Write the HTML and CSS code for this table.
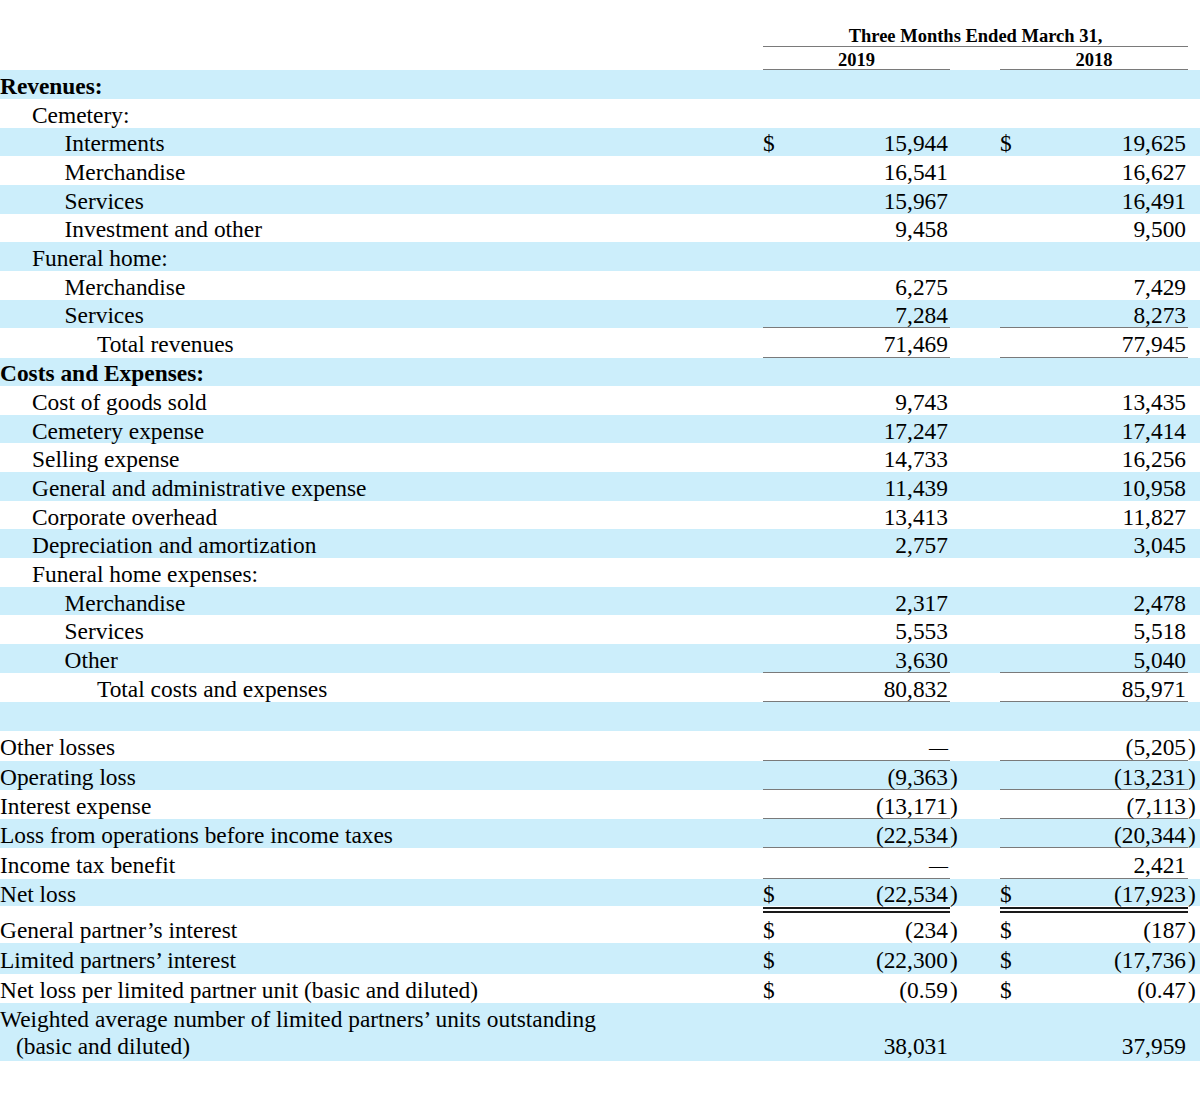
FILE: index.html
```html
<!DOCTYPE html>
<html lang="en">
<head>
<meta charset="utf-8">
<title>Statement of Operations</title>
<link rel="stylesheet" href="styles.css">
</head>
<body>
<table class="fin">
  <colgroup>
    <col class="c-label">
    <col class="c-num">
    <col class="c-par">
    <col class="c-gap">
    <col class="c-num2">
    <col class="c-par">
  </colgroup>
  <thead>
    <tr class="hd1">
      <td></td>
      <td colspan="4" class="hcell">Three Months Ended March 31,</td>
      <td></td>
    </tr>
    <tr class="hd2">
      <td></td>
      <td class="hcell">2019</td>
      <td></td>
      <td></td>
      <td class="hcell">2018</td>
      <td></td>
    </tr>
  </thead>
  <tbody>
    <tr class="b"><td class="lb bold">Revenues:</td><td class="n"></td><td></td><td></td><td class="n"></td><td></td></tr>
    <tr><td class="lb i1">Cemetery:</td><td class="n"></td><td></td><td></td><td class="n"></td><td></td></tr>
    <tr class="b"><td class="lb i2">Interments</td><td class="n"><span class="d">$</span>15,944</td><td></td><td></td><td class="n"><span class="d">$</span>19,625</td><td></td></tr>
    <tr><td class="lb i2">Merchandise</td><td class="n">16,541</td><td></td><td></td><td class="n">16,627</td><td></td></tr>
    <tr class="b"><td class="lb i2">Services</td><td class="n">15,967</td><td></td><td></td><td class="n">16,491</td><td></td></tr>
    <tr><td class="lb i2">Investment and other</td><td class="n">9,458</td><td></td><td></td><td class="n">9,500</td><td></td></tr>
    <tr class="b"><td class="lb i1">Funeral home:</td><td class="n"></td><td></td><td></td><td class="n"></td><td></td></tr>
    <tr><td class="lb i2">Merchandise</td><td class="n">6,275</td><td></td><td></td><td class="n">7,429</td><td></td></tr>
    <tr class="b ul"><td class="lb i2">Services</td><td class="n">7,284</td><td></td><td></td><td class="n">8,273</td><td></td></tr>
    <tr class="ul t293"><td class="lb i3">Total revenues</td><td class="n">71,469</td><td></td><td></td><td class="n">77,945</td><td></td></tr>
    <tr class="b"><td class="lb bold">Costs and Expenses:</td><td class="n"></td><td></td><td></td><td class="n"></td><td></td></tr>
    <tr><td class="lb i1">Cost of goods sold</td><td class="n">9,743</td><td></td><td></td><td class="n">13,435</td><td></td></tr>
    <tr class="b"><td class="lb i1">Cemetery expense</td><td class="n">17,247</td><td></td><td></td><td class="n">17,414</td><td></td></tr>
    <tr><td class="lb i1">Selling expense</td><td class="n">14,733</td><td></td><td></td><td class="n">16,256</td><td></td></tr>
    <tr class="b"><td class="lb i1">General and administrative expense</td><td class="n">11,439</td><td></td><td></td><td class="n">10,958</td><td></td></tr>
    <tr><td class="lb i1">Corporate overhead</td><td class="n">13,413</td><td></td><td></td><td class="n">11,827</td><td></td></tr>
    <tr class="b"><td class="lb i1">Depreciation and amortization</td><td class="n">2,757</td><td></td><td></td><td class="n">3,045</td><td></td></tr>
    <tr><td class="lb i1">Funeral home expenses:</td><td class="n"></td><td></td><td></td><td class="n"></td><td></td></tr>
    <tr class="b"><td class="lb i2">Merchandise</td><td class="n">2,317</td><td></td><td></td><td class="n">2,478</td><td></td></tr>
    <tr><td class="lb i2">Services</td><td class="n">5,553</td><td></td><td></td><td class="n">5,518</td><td></td></tr>
    <tr class="b ul"><td class="lb i2">Other</td><td class="n">3,630</td><td></td><td></td><td class="n">5,040</td><td></td></tr>
    <tr class="ul t29"><td class="lb i3">Total costs and expenses</td><td class="n">80,832</td><td></td><td></td><td class="n">85,971</td><td></td></tr>
    <tr class="b t288"><td class="lb"></td><td class="n"></td><td></td><td></td><td class="n"></td><td></td></tr>
    <tr class="ul t302"><td class="lb">Other losses</td><td class="n"><span class="dash">—</span></td><td></td><td></td><td class="n">(5,205</td><td class="p">)</td></tr>
    <tr class="b ul t293"><td class="lb">Operating loss</td><td class="n">(9,363</td><td class="p">)</td><td></td><td class="n">(13,231</td><td class="p">)</td></tr>
    <tr class="ul t29"><td class="lb">Interest expense</td><td class="n">(13,171</td><td class="p">)</td><td></td><td class="n">(7,113</td><td class="p">)</td></tr>
    <tr class="b ul t29"><td class="lb">Loss from operations before income taxes</td><td class="n">(22,534</td><td class="p">)</td><td></td><td class="n">(20,344</td><td class="p">)</td></tr>
    <tr class="ul t313"><td class="lb">Income tax benefit</td><td class="n"><span class="dash">—</span></td><td></td><td></td><td class="n">2,421</td><td></td></tr>
    <tr class="b t264"><td class="lb">Net loss</td><td class="n"><span class="d">$</span>(22,534</td><td class="p">)</td><td></td><td class="n"><span class="d">$</span>(17,923</td><td class="p">)</td></tr>
    <tr class="dbl"><td class="lb">General partner’s interest</td><td class="n"><span class="d">$</span>(234</td><td class="p">)</td><td></td><td class="n"><span class="d">$</span>(187</td><td class="p">)</td></tr>
    <tr class="b t308"><td class="lb">Limited partners’ interest</td><td class="n"><span class="d">$</span>(22,300</td><td class="p">)</td><td></td><td class="n"><span class="d">$</span>(17,736</td><td class="p">)</td></tr>
    <tr class="t29"><td class="lb">Net loss per limited partner unit (basic and diluted)</td><td class="n"><span class="d">$</span>(0.59</td><td class="p">)</td><td></td><td class="n"><span class="d">$</span>(0.47</td><td class="p">)</td></tr>
    <tr class="b two"><td class="lb hang">Weighted average number of limited partners’ units outstanding<br>(basic and diluted)</td><td class="n">38,031</td><td></td><td></td><td class="n">37,959</td><td></td></tr>
  </tbody>
</table>
</body>
</html>
```

FILE: styles.css
```css
html, body {
  margin: 0;
  padding: 0;
  background: #ffffff;
}

body {
  color: #000000;
  font-family: "Liberation Serif", "Times New Roman", serif;
}

.fin {
  width: 1200px;
  table-layout: fixed;
  border-collapse: separate;
  border-spacing: 0;
  font-size: 23.4px;
}

.c-label { width: 763px; }
.c-num { width: 187px; }
.c-par { width: 12px; }
.c-gap { width: 38px; }
.c-num2 { width: 188px; }

.fin td {
  padding: 3px 0 0 0;
  line-height: 24px;
  vertical-align: middle;
  white-space: nowrap;
}

/* header */
.fin thead td {
  padding: 0;
  font-size: 18.5px;
  font-weight: bold;
  line-height: 18px;
  vertical-align: bottom;
  text-align: center;
}
.fin thead tr.hd1 { height: 47px; }
.fin thead tr.hd2 { height: 23.3px; }
.fin thead .hcell {
  padding-bottom: 1px;
  box-shadow: inset 0 -1px 0 #7a7a7a;
}
.fin thead tr.hd1 .hcell { padding-bottom: 2px; }

/* body rows */
.fin tbody tr { height: 28.67px; }
.fin tbody tr.b td { background: #cceefb; }

.fin tbody tr.t29 { height: 29px; }
.fin tbody tr.t288 { height: 28.8px; }
.fin tbody tr.t293 { height: 29.3px; }
.fin tbody tr.t302 { height: 30.2px; }
.fin tbody tr.t308 { height: 30.8px; }
.fin tbody tr.t313 { height: 31.3px; }
.fin tbody tr.t264 { height: 26.4px; }

.lb { text-align: left; }
.bold { font-weight: bold; }
.fin td.i1 { padding-left: 32px; }
.fin td.i2 { padding-left: 64.5px; }
.fin td.i3 { padding-left: 97px; }

.fin td.n {
  text-align: right;
  padding-right: 2px;
}
.d {
  float: left;
}
.p {
  text-align: left;
}
.dash {
  font-size: 19px;
}

.fin tr.ul td.n {
  box-shadow: inset 0 -1px 0 #7a7a7a;
}

.fin tbody tr.dbl { height: 36.8px; }
.fin tr.dbl td { padding-top: 10px; }
.fin tr.dbl td.n {
  box-shadow: inset 0 1px 0 #ffffff, inset 0 3px 0 #1a1a1a, inset 0 5px 0 #ffffff, inset 0 7px 0 #1a1a1a;
}

.fin tbody tr.two { height: 57.7px; }
.fin tr.two td {
  padding-top: 0;
  padding-bottom: 1px;
  line-height: 27px;
  vertical-align: bottom;
}
.fin td.hang {
  padding-left: 16px;
  text-indent: -16px;
  white-space: normal;
}
```
